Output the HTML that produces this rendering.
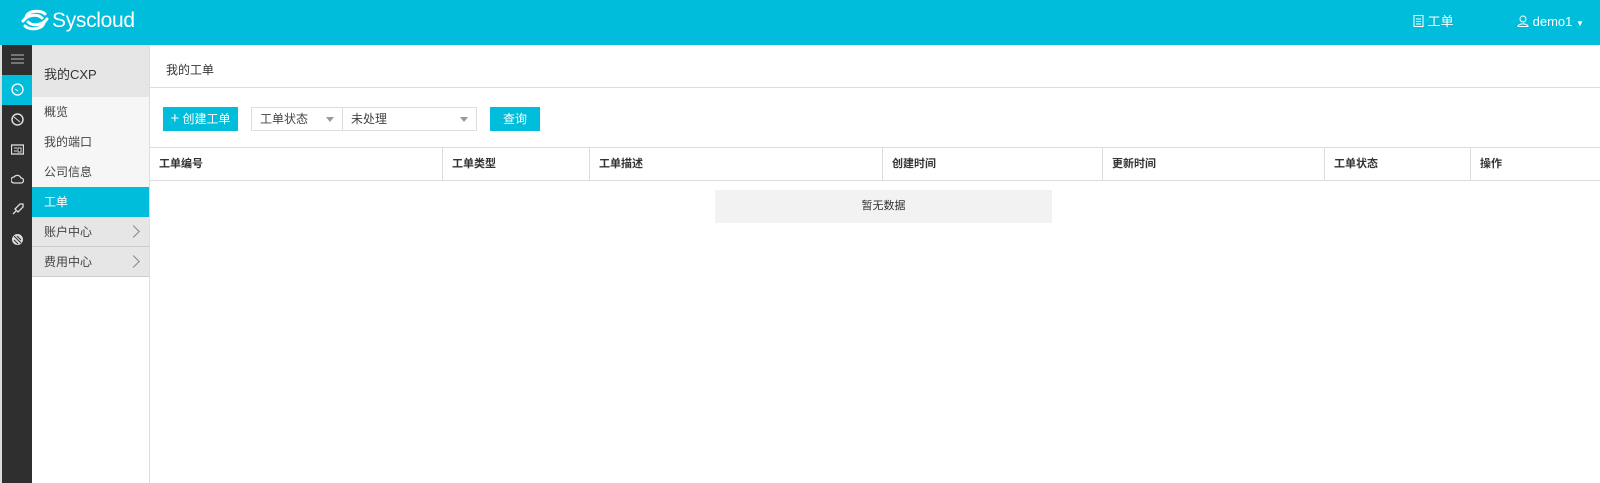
<!DOCTYPE html>
<html><head><meta charset="utf-8"><style>
*{margin:0;padding:0;box-sizing:border-box}
body{width:1600px;height:483px;overflow:hidden;background:#fff;font-family:"Liberation Sans","Noto Sans CJK SC",sans-serif;font-size:12px;color:#333;position:relative}
.hdr{position:absolute;left:0;top:0;width:1600px;height:45px;background:#00bedb;color:#fff}
.logo{position:absolute;left:20px;top:8px;font-size:21px;letter-spacing:-0.3px}
.logo svg{vertical-align:-5px;margin-right:2px}
.hr{position:absolute;top:0;height:45px;line-height:43px;font-size:13px}
.hr svg{vertical-align:-1px}
.dark{position:absolute;left:0;top:45px;width:32px;height:438px;background:#2f2f2f;border-left:2px solid #ddd}
.dark .it{height:30px;position:relative}
.dark .on{background:#00bedb}
.dark svg{position:absolute;left:9px;top:8px}
.sub{position:absolute;left:32px;top:45px;width:118px;height:438px;background:#fff;border-right:1px solid #ddd}
.sub .t{height:52px;background:#e6e6e6;padding:19px 0 0 12px;font-size:13px;color:#333}
.sub .m{height:30px;line-height:30px;padding-left:12px;background:#f6f6f6;color:#444;position:relative}
.sub .a{background:#00bedb;color:#fff}
.sub .g{background:#e6e6e6;border-bottom:1px solid #ccc}
.sub .g:after{content:"";position:absolute;right:11px;top:10px;width:8px;height:8px;border-right:1px solid #888;border-top:1px solid #888;transform:rotate(45deg)}
.main{position:absolute;left:150px;top:45px;width:1450px}
.ttl{height:43px;border-bottom:1px solid #ddd;padding:16px 0 0 16px;font-size:12px}
.btn{position:absolute;top:107px;height:24px;background:#00bedb;color:#fff;line-height:24px;text-align:center}
.sel{position:absolute;top:107px;height:24px;border:1px solid #ddd;line-height:22px;padding-left:8px;color:#444}
.sel:after{content:"";position:absolute;right:8px;top:9px;border:4px solid transparent;border-top:5px solid #999}
.th{position:absolute;left:150px;top:147px;width:1450px;height:34px;border-top:1px solid #ddd;border-bottom:1px solid #ddd}
.th div{position:absolute;top:0;height:32px;line-height:32px;padding-left:9px;font-weight:bold;border-left:1px solid #ddd;font-size:11px}
.empty{position:absolute;left:715px;top:190px;width:337px;height:33px;background:#f2f2f2;line-height:33px;text-align:center;font-size:11px}
</style></head><body>
<div class="hdr">
 <div class="logo"><svg width="30" height="24" viewBox="0 0 30 24"><path d="M6 10 C6 3 20 1 25 6 M3 13 C8 6 18 6 22 10 M24 14 C24 21 10 23 5 18 M27 11 C22 18 12 18 8 14" stroke="#fff" stroke-width="3" fill="none" stroke-linecap="round"/></svg>Syscloud</div>
 <div class="hr" style="left:1413px"><svg width="11" height="12" viewBox="0 0 11 12"><rect x="1" y="0.5" width="9" height="11" fill="none" stroke="#fff"/><path d="M3 4h5M3 6.5h5M3 9h5" stroke="#fff"/></svg> 工单</div>
 <div class="hr" style="left:1517px"><svg width="12" height="12" viewBox="0 0 12 12"><circle cx="6" cy="4" r="3" fill="none" stroke="#fff"/><path d="M1 11.5C1 8 11 8 11 11.5Z" fill="none" stroke="#fff"/></svg> demo1 <span style="font-size:8px">▼</span></div>
</div>
<div class="dark">
 <div class="it"><svg width="13" height="12"><path d="M0 2h13M0 6h13M0 10h13" stroke="#bbb"/></svg></div>
 <div class="it on"><svg width="13" height="13"><circle cx="6.5" cy="6.5" r="5.5" fill="none" stroke="#fff" stroke-width="1.3"/><path d="M4 6l3 2" stroke="#fff"/></svg></div>
 <div class="it"><svg width="13" height="13"><circle cx="6.5" cy="6.5" r="5.5" fill="none" stroke="#ddd" stroke-width="1.5"/><path d="M3 4l6 5" stroke="#ddd"/></svg></div>
 <div class="it"><svg width="13" height="13"><rect x="0.5" y="2" width="12" height="9" fill="none" stroke="#ddd" stroke-width="1.3"/><path d="M3 5h3M7 5h3v4h-3zM3 8h3" stroke="#ddd"/></svg></div>
 <div class="it"><svg width="13" height="13"><path d="M3 10a3 3 0 0 1 0-6a4 4 0 0 1 7 1a2.5 2.5 0 0 1 0 5z" fill="none" stroke="#ddd" stroke-width="1.3"/></svg></div>
 <div class="it"><svg width="13" height="13"><path d="M2 11l3-3M4 6l5-5h3v3l-5 5z" fill="none" stroke="#ddd" stroke-width="1.3"/></svg></div>
 <div class="it"><svg width="13" height="13"><circle cx="6.5" cy="6.5" r="5.5" fill="#ddd"/><path d="M3 3l7 7M3 7l4 4M6 3l4 4" stroke="#2f2f2f"/></svg></div>
</div>
<div class="sub">
 <div class="t">我的CXP</div>
 <div class="m">概览</div>
 <div class="m">我的端口</div>
 <div class="m">公司信息</div>
 <div class="m a">工单</div>
 <div class="m g">账户中心</div>
 <div class="m g">费用中心</div>
</div>
<div class="main"><div class="ttl">我的工单</div></div>
<div class="btn" style="left:163px;width:75px"><span style="font-size:15px">+</span> 创建工单</div>
<div class="sel" style="left:251px;width:92px">工单状态</div>
<div class="sel" style="left:342px;width:135px">未处理</div>
<div class="btn" style="left:490px;width:50px">查询</div>
<div class="th">
 <div style="left:0;border-left:none">工单编号</div>
 <div style="left:292px">工单类型</div>
 <div style="left:439px">工单描述</div>
 <div style="left:732px">创建时间</div>
 <div style="left:952px">更新时间</div>
 <div style="left:1174px">工单状态</div>
 <div style="left:1320px">操作</div>
</div>
<div class="empty">暂无数据</div>
</body></html>
